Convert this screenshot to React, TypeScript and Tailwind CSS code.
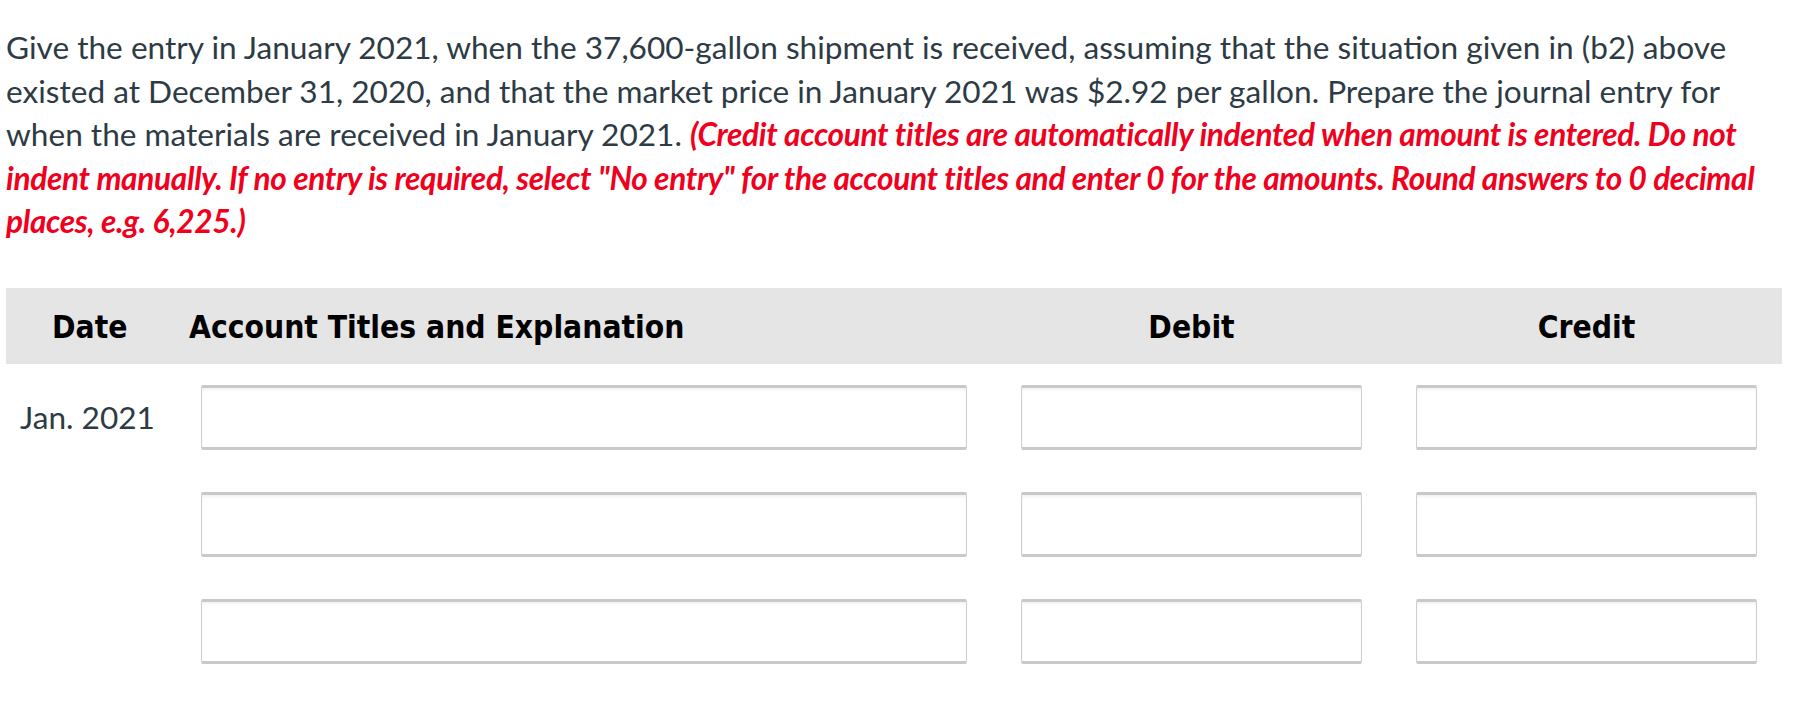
import React from "react";

const inputCls =
  "h-[65px] w-full bg-white border border-[#cfcfcf] border-t-[3px] border-b-[3px] border-t-[#c9c9c9] border-b-[#c9c9c9] rounded-[2px] shadow-[inset_0_2px_3px_rgba(0,0,0,0.05)]";

const cols = "grid grid-cols-[141px_766px_341px_341px] gap-x-[54px]";

function Row({ date }: { date?: string }) {
  return (
    <div className={`${cols} items-center`}>
      <div className="pl-[14px] text-[31.6px] text-[#2d3b45] whitespace-nowrap">{date ?? ""}</div>
      <div className={inputCls} />
      <div className={inputCls} />
      <div className={inputCls} />
    </div>
  );
}

const red = "font-bold italic text-[#f0001c] tracking-[-0.32px]";

export default function App() {
  return (
    <div
      className="w-[1804px] h-[718px] bg-white pl-[6px] pr-[22px] overflow-hidden"
      style={{ fontFamily: "Lato, 'Open Sans', sans-serif" }}
    >
      <p className="pt-[26px] text-[31.6px] leading-[43.6px] text-[#2d3b45] whitespace-nowrap">
        Give the entry in January 2021, when the 37,600-gallon shipment is received, assuming that the situation given in (b2) above
        <br />
        existed at December 31, 2020, and that the market price in January 2021 was $2.92 per gallon. Prepare the journal entry for
        <br />
        when the materials are received in January 2021.{" "}
        <span className={red}>
          (Credit account titles are automatically indented when amount is entered. Do not
        </span>
        <br />
        <span className={red}>
          indent manually. If no entry is required, select "No entry" for the account titles and enter 0 for the amounts. Round answers to 0 decimal
        </span>
        <br />
        <span className={red}>places, e.g. 6,225.)</span>
      </p>

      <div
        className={`mt-[44px] h-[76px] pt-[4px] bg-[#e5e5e5] ${cols} items-center text-[31.5px] font-bold text-black [font-stretch:condensed]`}
        style={{ fontFamily: "'DejaVu Sans Condensed', 'DejaVu Sans', sans-serif" }}
      >
        <div className="pl-[46px]">Date</div>
        <div className="-ml-[12px] whitespace-nowrap">Account Titles and Explanation</div>
        <div className="text-center">Debit</div>
        <div className="text-center">Credit</div>
      </div>

      <div className="mt-[21px] flex flex-col gap-[42px]">
        <Row date="Jan. 2021" />
        <Row />
        <Row />
      </div>
    </div>
  );
}
